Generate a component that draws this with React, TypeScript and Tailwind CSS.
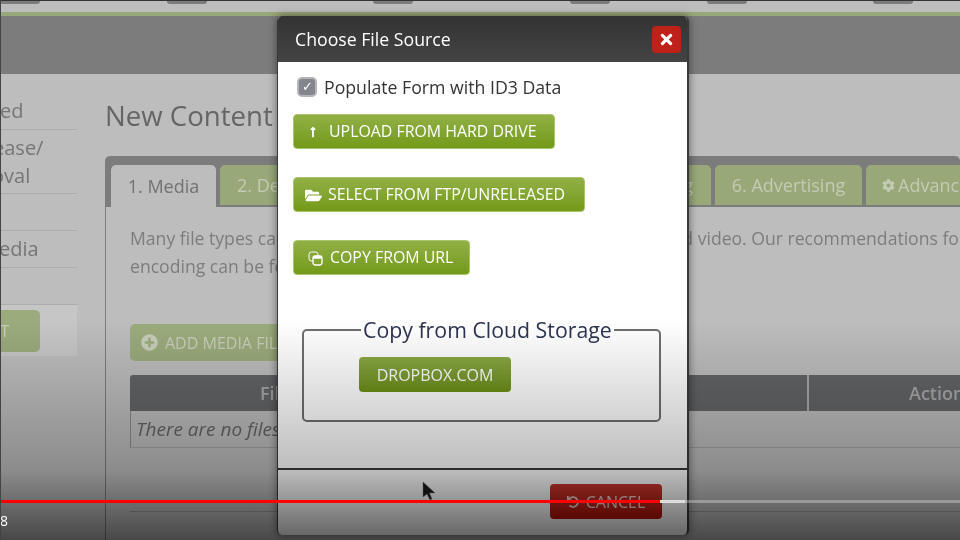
import React from "react";
import { FaCog, FaFolderOpen, FaLongArrowAltUp, FaPlusCircle, FaTimes, FaUndo } from "react-icons/fa";

const topBumps = ["w-[40px]", "ml-[127px] w-[40px]", "ml-[166px] w-[40px]", "ml-[157px] w-[40px]", "ml-[97px] w-[40px]", "ml-[126px] w-[40px]"];

function GreenButton({ icon, label, width }: { icon?: React.ReactNode; label: string; width: string }) {
    return (
        <button className={`${width} flex h-[35px] items-center rounded-[4px] border border-[#a9c46c] bg-gradient-to-b from-[#92b045] to-[#739a15] pt-[1px] text-[15.9px] font-medium text-white`}>
            {icon}
            {label}
        </button>
    );
}

function Sidebar() {
    return (
        <div className="w-[77px] shrink-0 pt-[19px] text-[20px] leading-[28px] text-[#767676]">
            <div className="h-[37px] border-b border-[#adadad] pt-[4px]">ed</div>
            <div className="h-[64px] border-b border-[#adadad] pt-[4px]">
                <div className="-ml-[7px]">ease/</div>
                <div className="-ml-[8px]">oval</div>
            </div>
            <div className="h-[37px] border-b border-[#adadad]"></div>
            <div className="h-[37px] border-b border-[#adadad] pt-[4px]">
                <div className="-ml-[1px]">edia</div>
            </div>
            <div className="h-[37px] border-b border-[#adadad]"></div>
            <div className="h-[51px] bg-[#c6c6c6] pt-[5px]">
                <div className="flex h-[42px] w-[40px] items-center rounded-r-[5px] bg-[#9bab7c] text-[17px] text-[#c8cdbb]">T</div>
            </div>
        </div>
    );
}

function MainPanel() {
    return (
        <div className="ml-[28px] min-w-0 flex-1">
            <h1 className="h-[82px] pt-[20px] text-[27.6px] leading-[42px] font-normal whitespace-nowrap text-[#656565]">New Content</h1>
            <div className="flex h-[51px] items-end gap-[4px] rounded-t-[5px] bg-[#7c7c7c] pl-[6px]">
                <div className="flex h-[42px] w-[105px] shrink-0 items-center justify-center rounded-t-[5px] bg-[#bdbdbd] text-[18px] text-[#727272]">1. Media</div>
                <div className="mb-[2px] flex h-[40px] w-[170px] shrink-0 items-center rounded-t-[5px] bg-[#98a878] pl-[17px] text-[18px] text-[#c4cbb4]">2. Details</div>
                <div className="mb-[2px] h-[40px] w-[140px] shrink-0 rounded-t-[5px] bg-[#98a878]"></div>
                <div className="mb-[2px] flex h-[40px] w-[173px] shrink-0 items-center justify-end rounded-t-[5px] bg-[#98a878] pr-[18px] text-[18px] text-[#c4cbb4]">5. Scheduling</div>
                <div className="mb-[2px] flex h-[40px] w-[147px] shrink-0 items-center justify-center rounded-t-[5px] bg-[#98a878] text-[18px] text-[#c4cbb4]">6. Advertising</div>
                <div className="mb-[2px] flex h-[40px] w-[140px] shrink-0 items-center gap-[3px] rounded-t-[5px] bg-[#98a878] pl-[16px] text-[18px] whitespace-nowrap text-[#c4cbb4]">
                    <FaCog className="text-[13px]" />
                    Advanced
                </div>
            </div>
            <div className="h-[400px] border-l border-[#7c7c7c] pt-[17px] pl-[24px]">
                <p className="w-[900px] text-[17.6px] leading-[28px] whitespace-nowrap text-[#7d7d7d]">
                    Many file types can be uploaded, including most prevalent audio and video. Our recommendations for
                    <br />
                    encoding can be found here.
                </p>
                <div className="mt-[44px] flex h-[37px] w-[220px] items-center gap-[7px] rounded-[5px] bg-[#9bab7c] pl-[11px] text-[16px] text-[#c8cdbb]">
                    <FaPlusCircle className="text-[17px]" />
                    ADD MEDIA FILES
                </div>
                <div className="mt-[14px] w-[940px] border-b border-[#a3a3a3]">
                    <div className="flex h-[36px] items-center rounded-t-[3px] bg-[#636466] text-[18px] font-semibold text-[#a8a8a8]">
                        <div className="w-[290px] text-center">File</div>
                        <div className="h-full w-[389px] border-r-2 border-[#a8a8a8]"></div>
                        <div className="flex-1 pl-[100px]">Actions</div>
                    </div>
                    <div className="h-[36px] border-l border-[#8a8a8a] pl-[5px] text-[19px] leading-[36px] whitespace-nowrap text-[#646464] italic">There are no files here yet.</div>
                </div>
                <div className="mt-[63px] w-[940px] border-t border-[#9a9a9a]"></div>
            </div>
        </div>
    );
}

function CopyIcon() {
    return (
        <svg className="mr-[7px] ml-[14px]" width="15" height="15" viewBox="0 0 15 15" fill="none" stroke="white">
            <rect x="1" y="1" width="9" height="9" rx="2.5" strokeWidth="1" />
            <rect x="5" y="5" width="9" height="9" rx="2.5" strokeWidth="1.3" fill="#82a52d" />
            <rect x="5" y="5" width="9" height="2.5" rx="1" fill="white" strokeWidth="0.5" />
        </svg>
    );
}

function Modal() {
    return (
        <div className="absolute top-[16px] left-[277px] flex h-[519px] w-[412px] flex-col overflow-hidden rounded-[5px] border-r-2 border-l border-[#3a3a3a] bg-white shadow-[0_0_8px_rgba(0,0,0,0.5)]">
            <div className="flex h-[46px] shrink-0 items-center justify-between bg-gradient-to-b from-[#333333] to-[#444444] pr-[6px] pl-[17px]">
                <span className="pt-[1px] text-[17.7px] font-medium text-white">Choose File Source</span>
                <button className="flex h-[27px] w-[29px] items-center justify-center rounded-[4px] bg-[#bd2118] text-[17px] text-white">
                    <FaTimes />
                </button>
            </div>
            <div className="flex-1 pt-[14px] pl-[15px]">
                <label className="ml-[4px] flex h-[22px] items-center gap-[7px] text-[17.7px] text-[#333333]">
                    <span className="flex h-[20px] w-[20px] items-center justify-center rounded-[5px] border-2 border-[#b4b4ba] bg-[#85858e] text-[13px] text-white">✓</span>
                    Populate Form with ID3 Data
                </label>
                <div className="mt-[16px] flex flex-col items-start gap-[28px]">
                    <GreenButton width="w-[262px]" label="UPLOAD FROM HARD DRIVE" icon={<FaLongArrowAltUp className="mr-[10px] ml-[13px] text-[12px]" />} />
                    <GreenButton width="w-[292px]" label="SELECT FROM FTP/UNRELEASED" icon={<FaFolderOpen className="mr-[6px] ml-[11px] text-[17px]" />} />
                    <GreenButton width="w-[177px]" label="COPY FROM URL" icon={<CopyIcon />} />
                </div>
                <fieldset className="mt-[40px] ml-[9px] h-[107px] w-[359px] rounded-[5px] border-2 border-[#6f6f6f]">
                    <legend className="ml-[57px] px-[2px] pt-[1px] text-[21.3px] leading-[28px] text-[#2d3450]">Copy from Cloud Storage</legend>
                    <button className="mt-[13px] ml-[55px] h-[35px] w-[152px] rounded-[4px] bg-gradient-to-b from-[#8aa845] to-[#6b8f14] text-[16px] font-medium text-white">DROPBOX.COM</button>
                </fieldset>
            </div>
            <div className="flex h-[67px] shrink-0 items-start justify-end border-t-2 border-[#3a3a3a] pt-[14px] pr-[25px]">
                <button className="flex h-[35px] w-[112px] items-center justify-center gap-[7px] rounded-[4px] bg-gradient-to-b from-[#c9362e] to-[#b50f03] text-[16px] text-[#f0d8d6]">
                    <FaUndo className="text-[12px]" />
                    CANCEL
                </button>
            </div>
        </div>
    );
}

export default function App() {
    return (
        <div className="relative h-[540px] w-[960px] overflow-hidden bg-[#bdbdbd] font-['Open_Sans',sans-serif] blur-[0.4px]">
            <div className="flex h-[12px] border-t border-[#333333]">
                {topBumps.map((cls) => (
                    <div key={cls} className={`${cls} h-[3px] shrink-0 rounded-b-[3px] bg-[#7c7c7c]`}></div>
                ))}
            </div>
            <div className="h-[4px] bg-[#99a878]"></div>
            <div className="h-[58px] bg-[#7c7c7c]"></div>
            <div className="flex">
                <Sidebar />
                <MainPanel />
            </div>
            <Modal />

            {/* video player gradient over everything */}
            <div className="absolute inset-x-0 top-[320px] bottom-0 bg-[linear-gradient(to_bottom,rgba(0,0,0,0)_0%,rgba(0,0,0,0.26)_68%,rgba(0,0,0,0.62)_100%)]"></div>

            {/* player progress */}
            <div className="absolute inset-x-0 top-[500px] flex h-[3px] bg-white/30">
                <div className="h-full w-[660px] bg-[#ff0000]"></div>
                <div className="h-full w-[25px] bg-[#dddddd]"></div>
            </div>
            <div className="absolute top-[512px] left-0 text-[14px] leading-[18px] text-white">8</div>
            <svg className="absolute top-[481px] left-[421px]" width="16" height="22" viewBox="0 0 16 22">
                <path d="M2 1 L2 16 L6 13 L9 19 L11 18 L8.5 12 L14 12 Z" fill="#111111" stroke="#555555" strokeWidth="0.5" />
            </svg>
            <div className="absolute inset-y-0 left-0 w-px bg-[#444444]"></div>
        </div>
    );
}
